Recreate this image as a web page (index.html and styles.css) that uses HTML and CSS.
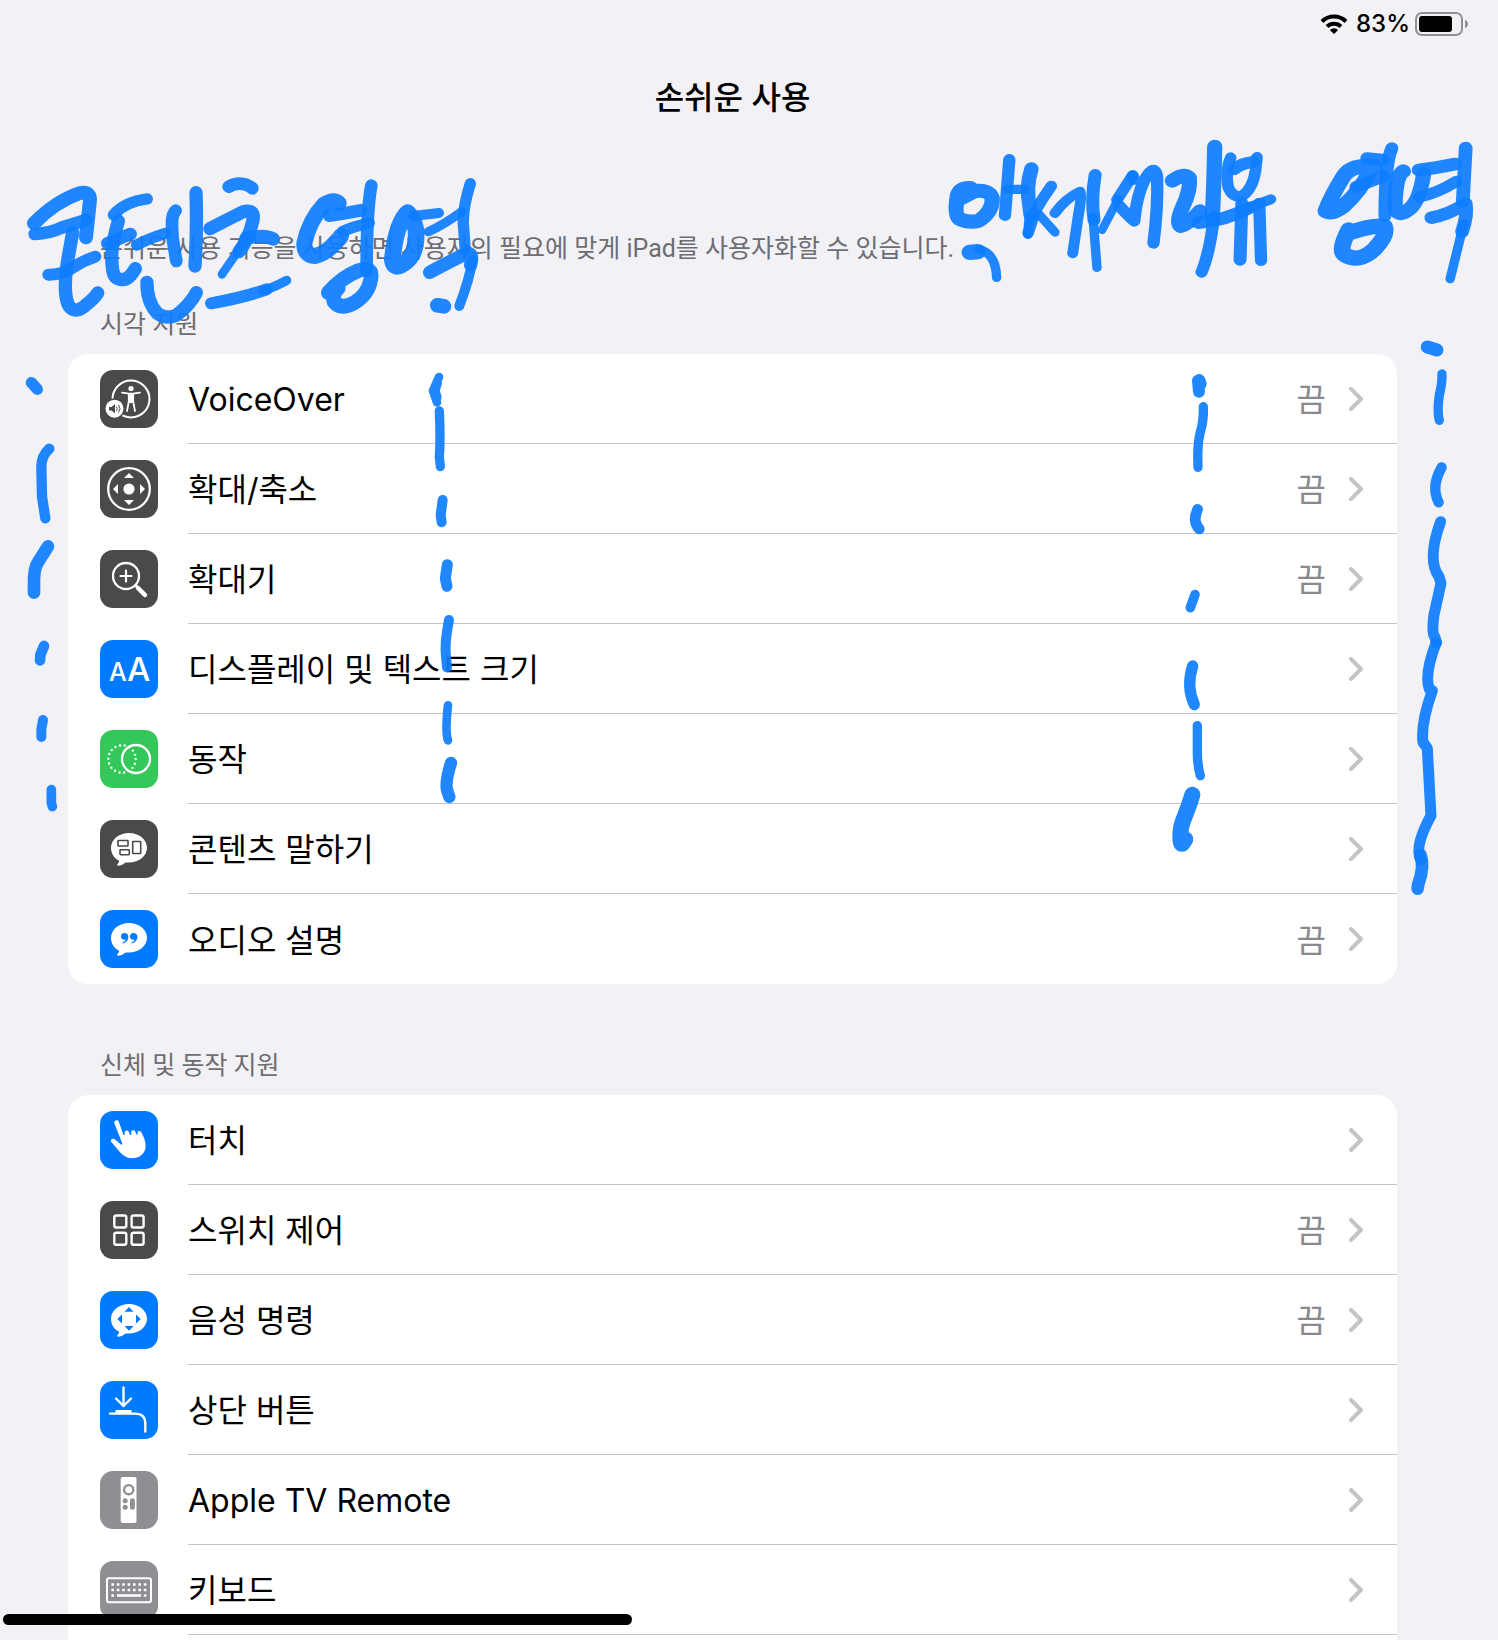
FILE: index.html
```html
<!DOCTYPE html>
<html lang="ko">
<head>
<meta charset="utf-8">
<meta name="viewport" content="width=device-width, initial-scale=1">
<title>손쉬운 사용</title>
<link rel="stylesheet" href="styles.css">
</head>
<body>
<svg class="defs" aria-hidden="true">
  <symbol id="chevron" viewBox="0 0 14 24"><path d="M2 2l10 10L2 22" fill="none" stroke="currentColor" stroke-width="4" stroke-linecap="round" stroke-linejoin="round"/></symbol>
  <symbol id="bubble" viewBox="0 0 58 58"><path d="M29 13c10 0 18 6.600 18 14.800S39 42.500 29 42.500c-1.500 0-2.800 0-4 .3-1.800 1.700-4.500 3-7 3-.9 0-1.100-.8-.5-1.500.9-1 1.500-2.200 1.700-3.500C14 38.300 11 33.500 11 27.800 11 19.600 19 13 29 13z" fill="#fff"/></symbol>
</svg>

<div class="screen">
  <div class="status">
    <svg class="wifi" viewBox="0 0 28 20" aria-hidden="true"><g fill="none" stroke="#000" stroke-width="4"><path d="M2 7.500a17 17 0 0 1 24 0"/><path d="M7 12.500a10 10 0 0 1 14 0"/></g><path d="M9.800 16a6.500 6.500 0 0 1 8.400 0L14 20z"/></svg>
    <span class="percent">83%</span>
    <svg class="battery" viewBox="0 0 54 24" aria-hidden="true"><rect x="1" y="1" width="46" height="22" rx="6" fill="none" stroke="#919195" stroke-width="2"/><rect x="4" y="4" width="33" height="16" rx="3"/><path d="M50 8c4 1 4 7 0 8z" fill="#919195"/></svg>
  </div>

  <main class="content">
    <h1 class="title">손쉬운 사용</h1>
    <p class="intro">손쉬운 사용 기능을 사용하면 사용자의 필요에 맞게 iPad를 사용자화할 수 있습니다.</p>

    <section class="group">
      <h2 class="group-title">시각 지원</h2>
      <ul class="card">
        <li><a class="row" href="#voiceover">
          <svg class="icon dark" viewBox="0 0 58 58"><circle cx="31" cy="29" r="18.500" fill="none" stroke="#fff" stroke-width="2"/><circle cx="31" cy="18.500" r="2.600" fill="#fff"/><path d="M22 22.600l7 1h4l7-1M28.800 24.500v7L27 41M33.200 24.500v7L35 41" fill="none" stroke="#fff" stroke-width="1.800" stroke-linecap="round" stroke-linejoin="round"/><path d="M28.500 23.500h5V33h-5z" fill="#fff"/><circle cx="14.500" cy="38.700" r="10.500" fill="#4a4a4a"/><circle cx="14.500" cy="38.700" r="9" fill="#fff"/><path d="M9 37h2.500l3.500-3v9.500l-3.500-3H9z" fill="#4a4a4a"/><path d="M16.500 36.500q1.500 2.200 0 4.500M18.500 35q3 3.700 0 7.500" fill="none" stroke="#4a4a4a"/></svg>
          <span class="body"><span class="label">VoiceOver</span><span class="value">끔</span><svg class="chevron"><use href="#chevron"/></svg></span></a></li>
        <li><a class="row" href="#zoom">
          <svg class="icon dark" viewBox="0 0 58 58"><circle cx="29" cy="29" r="20.800" fill="none" stroke="#fff" stroke-width="2.300"/><circle cx="29" cy="29" r="5.600" fill="#fff"/><path d="M29 13l5 5H24zM29 45l5-5H24zM13 29l5-5v10zM45 29l-5-5v10z" fill="#fff"/></svg>
          <span class="body"><span class="label">확대/축소</span><span class="value">끔</span><svg class="chevron"><use href="#chevron"/></svg></span></a></li>
        <li><a class="row" href="#magnifier">
          <svg class="icon dark" viewBox="0 0 58 58"><g fill="none" stroke="#fff" stroke-linecap="round"><circle cx="26" cy="26" r="13" stroke-width="2.300"/><path d="M20.500 26h11M26 20.500v11" stroke-width="2.200"/><path d="M35.500 35.500l2 2" stroke-width="2.500"/><path d="M38 38l7 7" stroke-width="4.500"/></g></svg>
          <span class="body"><span class="label">확대기</span><span class="value">끔</span><svg class="chevron"><use href="#chevron"/></svg></span></a></li>
        <li><a class="row" href="#display">
          <svg class="icon blue" viewBox="0 0 58 58"><text class="aa" x="9" y="41" font-size="25">A</text><text class="aa" x="27" y="41" font-size="33">A</text></svg>
          <span class="body"><span class="label">디스플레이 및 텍스트 크기</span><svg class="chevron"><use href="#chevron"/></svg></span></a></li>
        <li><a class="row" href="#motion">
          <svg class="icon green" viewBox="0 0 58 58"><g fill="none" stroke="#fff"><circle cx="36" cy="29" r="14" stroke-width="2.300"/><circle cx="22" cy="29" r="13.700" stroke-width="2.400" stroke-linecap="round" stroke-dasharray="0 4.781"/></g></svg>
          <span class="body"><span class="label">동작</span><svg class="chevron"><use href="#chevron"/></svg></span></a></li>
        <li><a class="row" href="#spoken">
          <svg class="icon dark" viewBox="0 0 58 58"><use href="#bubble"/><g fill="none" stroke="#4a4a4a" stroke-width="1.600"><rect x="18" y="20.500" width="10" height="5.500" rx=".6"/><rect x="20" y="29.700" width="9.300" height="5" rx=".6"/><rect x="32.700" y="21.500" width="8" height="12" rx=".6"/></g></svg>
          <span class="body"><span class="label">콘텐츠 말하기</span><svg class="chevron"><use href="#chevron"/></svg></span></a></li>
        <li><a class="row" href="#audio">
          <svg class="icon blue" viewBox="0 0 58 58"><use href="#bubble"/><g fill="#007aff"><path id="quote" d="M24.600 23a3.500 3.500 0 0 0-3.600 3.500c0 2 1.500 3.300 3.300 3.300.6 0 1.100-.1 1.500-.4-.5 1.400-1.600 2.300-3.100 2.900-.7.300-.4 1.200.4 1 3.200-.8 5.300-3.500 5.300-6.600 0-2.300-1.600-3.700-3.800-3.700z"/><use href="#quote" x="9"/></g></svg>
          <span class="body"><span class="label">오디오 설명</span><span class="value">끔</span><svg class="chevron"><use href="#chevron"/></svg></span></a></li>
      </ul>
    </section>

    <section class="group">
      <h2 class="group-title">신체 및 동작 지원</h2>
      <ul class="card card-open">
        <li><a class="row" href="#touch">
          <svg class="icon blue" viewBox="0 0 58 58"><path d="M14.300 12c-.8-2.700 3.600-4 4.500-1.300L23.500 24l1.300-.2-.2-2.300c0-2.400 3.200-2.800 4.200-.6l1.400 3 1.300-.2-.3-2.500c-.1-2.300 3.100-2.700 4.100-.5l1.300 3 1.200-.1-.3-1.800c0-2.200 2.700-2.600 3.800-.5 2.500 4.600 4.700 9.500 4.300 14.700-.4 6.600-6.200 11.300-13.300 11.300-6 0-10-3.200-13.500-7.500l-7.300-8.500c-2-2.300 1-4.700 3.300-3l6.200 5.200c.8.600 1.600 0 1.300-.9z" fill="#fff"/></svg>
          <span class="body"><span class="label">터치</span><svg class="chevron"><use href="#chevron"/></svg></span></a></li>
        <li><a class="row" href="#switch">
          <svg class="icon dark" viewBox="0 0 58 58"><g fill="none" stroke="#fff" stroke-width="2.400"><rect x="14.300" y="14.500" width="12" height="12" rx="2"/><rect x="31.600" y="14.500" width="12" height="12" rx="2"/><rect x="14.300" y="31.800" width="12" height="12" rx="2"/><rect x="31.600" y="31.800" width="12" height="12" rx="2"/></g></svg>
          <span class="body"><span class="label">스위치 제어</span><span class="value">끔</span><svg class="chevron"><use href="#chevron"/></svg></span></a></li>
        <li><a class="row" href="#voice">
          <svg class="icon blue" viewBox="0 0 58 58"><use href="#bubble"/><path d="M29 16l4.500 4.700h-9zM29 39.700l4.500-4.700h-9zM17.300 28l4.700-4.500v9zM40.700 28L36 23.500v9z" fill="#007aff"/></svg>
          <span class="body"><span class="label">음성 명령</span><span class="value">끔</span><svg class="chevron"><use href="#chevron"/></svg></span></a></li>
        <li><a class="row" href="#top-button">
          <svg class="icon blue" viewBox="0 0 58 58"><g fill="none" stroke="#fff" stroke-width="2.400" stroke-linecap="round" stroke-linejoin="round"><path d="M23.500 6.500V25M16 17.500l7.500 7.500 7.500-7.500M10 32.600h25c6 0 10.300 3 10.300 10v8"/></g><path d="M15.500 29h16v4h-16z" fill="#fff"/></svg>
          <span class="body"><span class="label">상단 버튼</span><svg class="chevron"><use href="#chevron"/></svg></span></a></li>
        <li><a class="row" href="#remote">
          <svg class="icon gray" viewBox="0 0 58 58"><rect x="20.700" y="6" width="15.800" height="46" rx="2" fill="#fff"/><circle cx="28.700" cy="18.700" r="4.600" fill="none" stroke="#8e8e93" stroke-width="2.400"/><g fill="#8e8e93"><circle cx="25.200" cy="29.700" r="2.500"/><circle cx="25.200" cy="36.300" r="2.500"/><rect x="30" y="27.200" width="4.800" height="11.600" rx="2.400"/></g></svg>
          <span class="body"><span class="label">Apple TV Remote</span><svg class="chevron"><use href="#chevron"/></svg></span></a></li>
        <li><a class="row" href="#keyboard">
          <svg class="icon gray" viewBox="0 0 58 58"><g fill="none" stroke="#fff"><rect x="7" y="17.200" width="44" height="24" rx="2" stroke-width="2"/><path d="M11.400 23.500h36M11.400 29h36" stroke-width="2.600" stroke-dasharray="2.600 2.800"/><path d="M11.400 34.500h2.600M17 34.500h24M43.800 34.500h2.600" stroke-width="2.600"/></g></svg>
          <span class="body"><span class="label">키보드</span><svg class="chevron"><use href="#chevron"/></svg></span></a></li>
      </ul>
    </section>
  </main>

  <svg class="ink" viewBox="0 0 1498 1640" role="img" aria-label="콘텐츠 영역, 악세서리 뷰 영역">
    <g transform="translate(0 160) scale(.3333)" stroke-width="38">
      <path stroke-width="42" d="M102 190Q165 125 240 99Q276 92 269 130L258 232"/>
      <path stroke-width="38" d="M104 222Q150 220 185 203L258 180"/>
      <path stroke-width="40" d="M218 218C205 290 192 350 197 400C202 462 235 458 260 433Q283 415 293 399"/>
      <path stroke-width="36" d="M145 344Q190 345 220 322Q250 302 286 290"/>
      <path stroke-width="34" d="M340 165Q375 125 442 117"/>
      <path stroke-width="40" d="M355 183C330 270 334 300 338 330C343 366 375 365 393 345L406 326"/>
      <path stroke-width="38" d="M322 250L392 222"/>
      <path stroke-width="34" d="M410 255Q440 238 496 220"/>
      <path stroke-width="38" d="M527 152C512 165 516 200 518 235L529 303"/>
      <path stroke-width="40" d="M588 98Q592 200 585 318"/>
      <path stroke-width="40" d="M441 367Q440 425 472 460Q500 480 530 465Q570 435 589 398"/>
      <path stroke-width="38" d="M686 80Q710 66 735 73Q750 78 757 85"/>
      <path stroke-width="40" d="M630 206Q680 180 730 155Q768 146 758 185Q745 240 717 275"/>
      <path stroke-width="26" d="M722 262L666 343"/>
      <path stroke-width="40" d="M738 235Q795 222 820 237"/>
      <path stroke-width="36" d="M633 430Q735 412 800 388"/>
      <path stroke-width="28" d="M790 392Q830 378 860 361"/>
      <path stroke-width="48" d="M1016 130Q1000 116 972 134Q928 180 913 250Q912 286 945 288Q980 280 1008 245Q1020 235 1023 228"/>
      <path stroke-width="38" d="M988 167Q1040 160 1084 151"/>
      <path stroke-width="34" d="M1028 214Q1060 200 1108 189"/>
      <path stroke-width="38" d="M1114 77Q1100 150 1100 333"/>
      <path stroke-width="44" d="M985 398Q1025 352 1075 332Q1122 316 1112 360Q1104 405 1060 430Q1022 450 1002 425Q995 405 1015 384"/>
      <path stroke-width="50" d="M1223 158Q1188 190 1177 300Q1182 332 1212 310Q1253 285 1248 210Q1240 172 1223 158"/>
      <path stroke-width="30" d="M1240 168L1317 159"/>
      <path stroke-width="28" d="M1285 215Q1330 195 1385 155"/>
      <path stroke-width="34" d="M1411 71Q1389 140 1390 190L1396 270"/>
      <path stroke-width="40" d="M1289 337Q1330 315 1395 282Q1423 274 1412 315"/>
      <path stroke-width="30" d="M1417 300Q1410 355 1378 438"/>
      <path stroke-width="44" d="M1312 436L1332 439"/>
    </g>
    <g transform="translate(930 120) scale(.3622 .3333)" stroke-width="36">
      <path stroke-width="42" d="M112 204Q84 202 76 225Q66 285 80 296Q105 310 135 302Q173 275 172 235Q165 208 125 213L84 236"/>
      <path stroke-width="34" d="M219 119L207 286"/>
      <path stroke-width="28" d="M215 208L260 208"/>
      <path stroke-width="40" d="M280 147Q264 200 275 260L278 285"/>
      <path stroke-width="26" d="M274 285L270 344"/>
      <path d="M110 397L132 395" stroke-width="46"/>
      <path d="M135 388Q182 400 184 473" stroke-width="26"/>
      <path d="M335 198Q310 235 290 275L271 339" stroke-width="32"/>
      <path stroke-width="26" d="M300 282L345 337"/>
      <path stroke-width="30" d="M345 279Q375 235 414 215Q420 225 409 290L394 400"/>
      <path d="M456 165Q444 240 453 300" stroke-width="36"/>
      <path d="M450 290L461 443" stroke-width="26"/>
      <path stroke-width="32" d="M559 167L516 240"/>
      <path stroke-width="24" d="M520 236L475 330"/>
      <path stroke-width="34" d="M560 168L561 178M522 257Q548 288 564 303Q570 230 592 180Q620 128 627 170Q630 260 617 369"/>
      <path stroke-width="42" d="M669 182Q700 158 716 174Q720 210 698 260Q677 310 692 318Q715 313 745 274"/>
      <path stroke-width="42" d="M786 80Q784 200 779 300"/>
      <path stroke-width="34" d="M784 290Q772 400 750 456"/>
      <path d="M830 113Q815 150 823 200Q835 235 862 228Q892 205 899 150L903 112" stroke-width="32"/>
      <path d="M840 148Q858 130 892 126" stroke-width="36"/>
      <path stroke-width="38" d="M741 308Q820 300 880 264"/>
      <path stroke-width="30" d="M865 268L941 238"/>
      <path stroke-width="36" d="M861 250L856 419"/>
      <path stroke-width="34" d="M909 250L914 421"/>
      <path stroke-width="36" d="M1250 119L1206 115"/>
      <path stroke-width="44" d="M1228 140Q1162 132 1140 172Q1107 230 1092 273Q1112 283 1140 260Q1192 210 1220 142"/>
      <path d="M1176 201L1252 169" stroke-width="36"/>
      <path stroke-width="36" d="M1275 85Q1256 130 1256 288"/>
      <path stroke-width="46" d="M1156 330Q1128 390 1143 403Q1185 432 1228 386Q1264 345 1255 320Q1222 314 1160 338"/>
      <path stroke-width="42" d="M1307 154Q1285 165 1284 260Q1290 293 1320 270Q1350 250 1363 162"/>
      <path stroke-width="38" d="M1349 150Q1400 144 1450 132"/>
      <path stroke-width="34" d="M1351 231Q1400 220 1454 184"/>
      <path stroke-width="38" d="M1479 84L1471 245"/>
      <path stroke-width="38" d="M1384 293Q1430 285 1479 251Q1485 285 1469 335"/>
      <path stroke-width="26" d="M1474 310L1436 477"/>
    </g>
    <g transform="translate(0 360) scale(.3333)" stroke-width="28">
      <path stroke-width="34" d="M94 68L112 88"/>
      <path stroke-width="31" d="M148 266Q124 288 124 320L126 410L136 475"/>
      <path stroke-width="38" d="M144 559L115 605Q100 625 102 680L102 698"/>
      <path stroke-width="32" d="M132 858L121 885L120 901"/>
      <path stroke-width="30" d="M129 1080L124 1108V1131"/>
      <path stroke-width="29" d="M154 1289V1328L157 1340"/>
    </g>
    <g transform="translate(400 360) scale(.3333)" stroke-width="26">
      <path stroke-width="26" d="M117 51L99 92L111 127M113 68L106 92L112 112"/>
      <path stroke-width="28" d="M118 153Q122 240 118 290L121 320"/>
      <path stroke-width="30" d="M128 420L122 465L125 487"/>
      <path stroke-width="33" d="M142 614L136 655L141 679"/>
      <path stroke-width="30" d="M147 780Q133 850 138 890L141 922"/>
      <path stroke-width="26" d="M144 1036Q135 1115 144 1141"/>
      <path stroke-width="37" d="M153 1209Q134 1270 142 1293L148 1311"/>
    </g>
    <g transform="translate(1150 340) scale(.3333)" stroke-width="26">
      <path stroke-width="36" d="M144 122L147 155M148 120L152 132"/>
      <path stroke-width="28" d="M160 200Q162 240 150 280Q141 320 144 382"/>
      <path stroke-width="32" d="M143 508Q126 545 148 567"/>
      <path stroke-width="29" d="M135 764L121 803"/>
      <path stroke-width="39" d="M832 21L861 30"/>
      <path stroke-width="28" d="M876 102Q877 130 868 165Q861 215 868 241"/>
      <path stroke-width="31" d="M875 382Q842 440 866 487"/>
      <path stroke-width="33" d="M872 545Q830 660 867 710L873 730L852 825Q844 880 855 892L860 908"/>
    </g>
    <g transform="translate(1150 620) scale(.3333)" stroke-width="28">
      <path stroke-width="34" d="M128 138Q108 200 133 254"/>
      <path stroke-width="28" d="M142 317V400Q143 440 151 467"/>
      <path stroke-width="48" d="M127 524Q118 555 104 590Q90 620 91 655Q92 682 101 665L106 658"/>
      <path stroke-width="33" d="M858 69Q822 165 838 207L847 212Q812 310 819 367L832 385L843 587Q792 680 812 720"/>
      <path stroke-width="38" d="M812 705Q824 740 805 792L803 806"/>
    </g>
  </svg>
  <div class="home-bar"></div>
</div>
</body>
</html>
```
FILE: styles.css
```css
* { box-sizing: border-box; }

body {
  margin: 0;
  background: #f2f1f6;
  color: #000;
  font-family: Inter, "Noto Sans CJK KR", sans-serif;
}

.defs { position: absolute; width: 0; height: 0; }

.screen { position: relative; overflow: hidden; }

.status {
  display: flex;
  align-items: center;
  justify-content: flex-end;
  gap: 5px;
  height: 48px;
  padding-right: 29px;
}
.wifi { width: 28px; height: 20px; margin-right: 3px; }
.percent { font-size: 24px; font-weight: 500; line-height: 32px; }
.battery { width: 54px; height: 24px; }

.content { padding: 0 101px 0 68px; }

.title {
  margin: 0;
  font-size: 32px;
  font-weight: 500;
  line-height: 100px;
  text-align: center;
}

.intro,
.group-title {
  margin: 0;
  padding: 0 32px;
  color: #6d6d72;
  font-family: Roboto, "Noto Sans CJK KR", sans-serif;
  font-size: 25px;
  font-weight: 400;
  line-height: 32px;
}
.intro { margin-top: 85px; }

.group { margin-top: 44px; }
.group + .group { margin-top: 66px; }
.group-title { margin-bottom: 13px; }

.card {
  margin: 0;
  padding: 0;
  overflow: hidden;
  list-style: none;
  background: #fff;
  border-radius: 20px;
}
.card-open {
  padding-bottom: 5px;
  border-radius: 20px 20px 0 0;
}

.row {
  display: flex;
  align-items: center;
  gap: 30px;
  height: 90px;
  padding-left: 32px;
  color: inherit;
  text-decoration: none;
}
.body {
  display: flex;
  flex: 1;
  align-items: center;
  gap: 23px;
  height: 100%;
  padding-right: 34px;
  border-bottom: 1px solid #c4c4c6;
}
.card:not(.card-open) li:last-child .body { border-bottom: 0; }
.label,
.value {
  padding-top: 3px;
  font-size: 32px;
  line-height: 48px;
}
.label { flex: 1; }
.value { color: #8a8a8e; }
.chevron { width: 14px; height: 24px; color: #c4c4c6; }

.icon { flex: none; width: 58px; height: 58px; border-radius: 13px; }
.dark { background: #4a4a4a; }
.blue { background: #007aff; }
.green { background: #34c759; }
.gray { background: #8e8e93; }
.aa { fill: #fff; font-weight: 500; }

.ink {
  position: absolute;
  top: 0;
  left: 0;
  width: 100%;
  fill: none;
  stroke: #0d7dff;
  stroke-opacity: .92;
  stroke-linecap: round;
  stroke-linejoin: round;
  pointer-events: none;
}

.home-bar {
  position: absolute;
  bottom: 15px;
  left: 3px;
  width: 42%;
  height: 11px;
  border-radius: 6px;
  background: #000;
}
```
